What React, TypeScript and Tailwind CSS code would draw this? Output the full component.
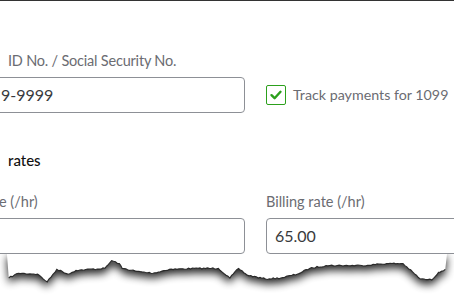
import { useMemo } from "react";

// key points of the torn edge, y relative to the svg top
const edge: [number, number][] = [
  [0, 25], [10, 20], [30, 21], [40, 29], [50, 16], [62, 21], [70, 17],
  [100, 15], [107, 7], [115, 10], [118, 15], [133, 18], [150, 20],
  [167, 16], [197, 15], [218, 15], [230, 25], [239, 15], [248, 22],
  [267, 26], [283, 25], [300, 21], [313, 15], [330, 12], [367, 12],
  [393, 10], [410, 10], [428, 26], [440, 27], [447, 19], [454, 16],
];

function useTornPoints() {
  return useMemo(() => {
    let seed = 7;
    const rnd = () => {
      seed = (seed * 16807) % 2147483647;
      return seed / 2147483647;
    };
    const pts: string[] = [];
    for (let i = 0; i < edge.length - 1; i++) {
      const [x1, y1] = edge[i];
      const [x2, y2] = edge[i + 1];
      const steps = Math.max(1, Math.round((x2 - x1) / 2));
      for (let s = 0; s < steps; s++) {
        const t = s / steps;
        const jitter = s === 0 ? 0 : (rnd() - 0.5) * 1.4;
        pts.push(`${(x1 + (x2 - x1) * t).toFixed(1)},${(y1 + (y2 - y1) * t + jitter).toFixed(1)}`);
      }
    }
    pts.push(`${edge[edge.length - 1][0]},${edge[edge.length - 1][1]}`);
    return pts;
  }, []);
}

function TornEdge() {
  const pts = useTornPoints();
  const line = pts.join(" ");
  const area = `-2,-2 ${line} 456,-2`;
  return (
    <svg width="454" height="52" viewBox="0 0 454 52" className="block">
      <defs>
        <filter id="blur" x="-5%" y="-50%" width="110%" height="200%">
          <feGaussianBlur stdDeviation="4.2" />
        </filter>
      </defs>
      <polygon points={area} fill="#000" opacity="0.85" transform="translate(0 5)" filter="url(#blur)" />
      <polygon points={area} fill="#fff" />
      <polyline points={line} fill="none" stroke="#2a2a2a" strokeWidth="1.2" />
    </svg>
  );
}

function Check() {
  return (
    <div className="flex h-5 w-5 shrink-0 items-center justify-center rounded-[2px] border border-[#2ca01c] bg-white">
      <svg width="14" height="14" viewBox="0 0 14 14">
        <path d="M2.5 7.2 L5.6 10.2 L11.5 3.8" fill="none" stroke="#2ca01c" strokeWidth="2.4" strokeLinecap="round" strokeLinejoin="round" />
      </svg>
    </div>
  );
}

export default function App() {
  return (
    <div
      className="flex h-[304px] w-[454px] flex-col overflow-hidden bg-white"
      style={{ fontFamily: "Lato, 'Open Sans', sans-serif" }}
    >
      <div className="h-px shrink-0 bg-[#333]" />

      <div className="mt-[50px] flex gap-[21px]">
        <div className="w-[245px] shrink-0">
          <div className="pl-2 text-[14.5px] leading-[20px] tracking-[-0.2px] text-[#6b6c72]">ID No. / Social Security No.</div>
          <div className="-ml-5 mt-[6px] flex h-9 w-[265px] items-center rounded border border-[#8d9096] pl-5 text-[16px] text-[#393a3d]">
            9-9999
          </div>
        </div>
        <div className="flex h-9 items-center gap-[7px] self-end whitespace-nowrap text-[14.25px] text-[#6b6c72]">
          <Check />
          <span>Track payments for 1099</span>
        </div>
      </div>

      <div className="mt-[37px] pl-2 text-[15px] font-medium leading-[20px] text-[#111]">rates</div>

      <div className="mt-[22px] flex gap-[21px]">
        <div className="w-[245px] shrink-0">
          <div className="-ml-[1px] text-[14.5px] leading-[20px] text-[#6b6c72]">e (/hr)</div>
          <div className="-ml-5 mt-[6px] h-9 w-[265px] rounded border border-[#8d9096]" />
        </div>
        <div className="w-[220px] shrink-0">
          <div className="text-[14.5px] leading-[20px] text-[#6b6c72]">Billing rate (/hr)</div>
          <div className="mt-[6px] flex h-9 items-center rounded border border-[#8d9096] pl-2 text-[16px] text-[#393a3d]">
            65.00
          </div>
        </div>
      </div>

      <TornEdge />
    </div>
  );
}
